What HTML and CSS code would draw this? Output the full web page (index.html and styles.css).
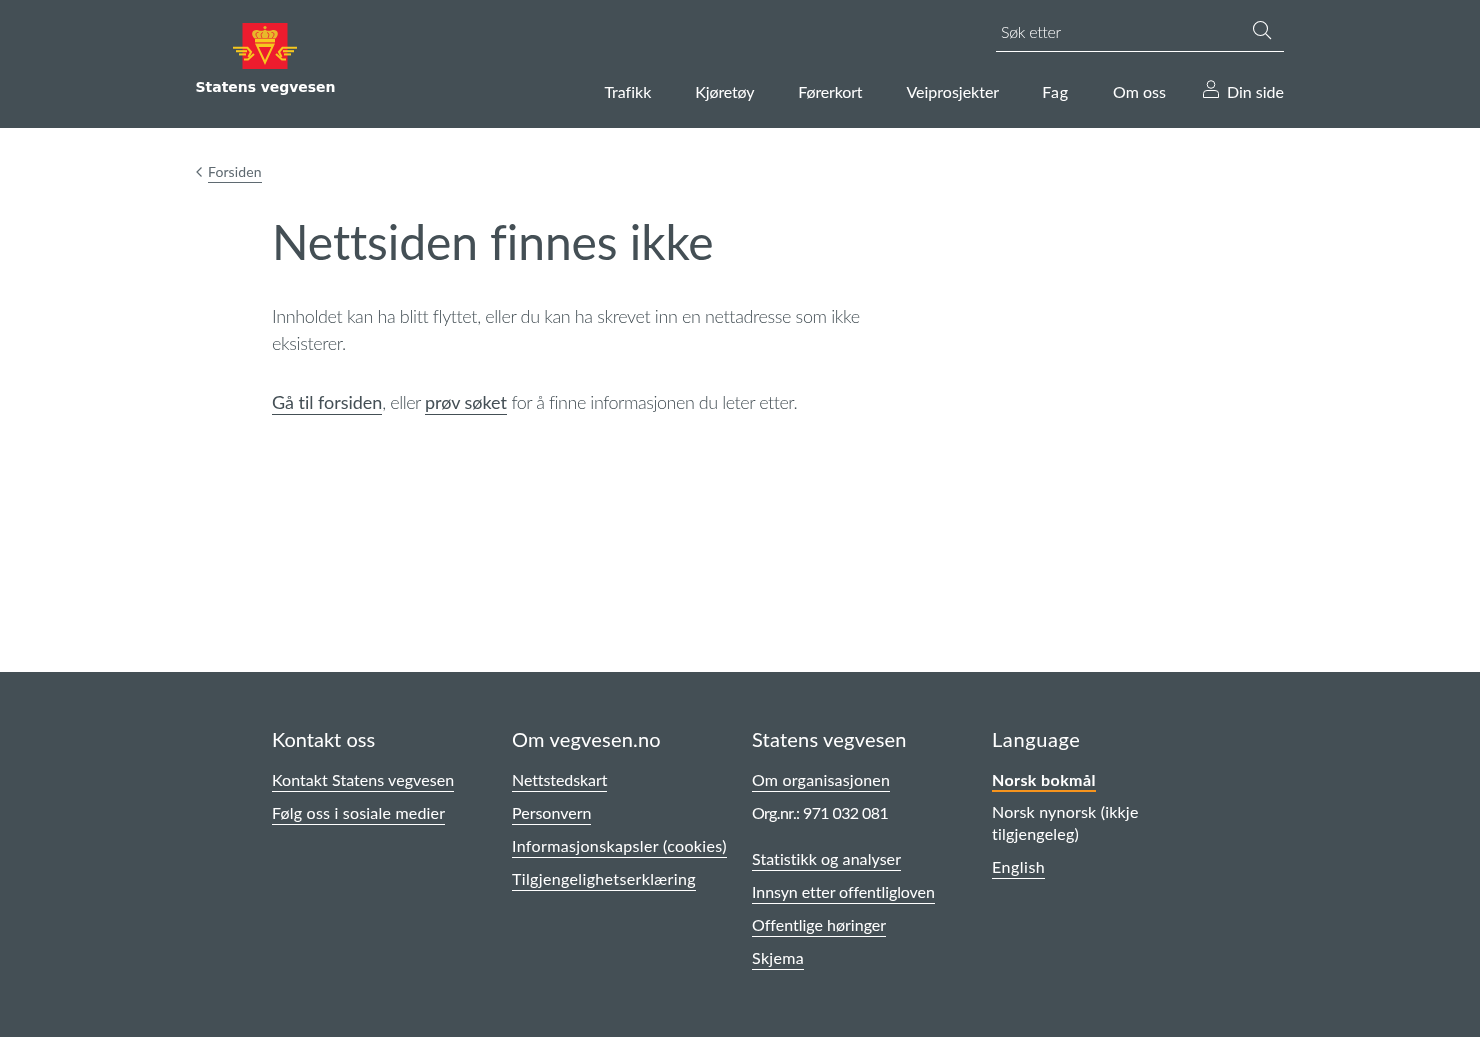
FILE: index.html
```html
<!DOCTYPE html>
<html lang="no">
<head>
<meta charset="utf-8">
<title>Nettsiden finnes ikke</title>
<link rel="stylesheet" href="styles.css">
</head>
<body>
<header class="site-header">
  <div class="header-inner">
    <a class="logo" href="#">
      <svg class="logo-mark" viewBox="0 0 64 46" width="64" height="46">
        <rect x="9.5" y="0" width="45" height="46" fill="#ed1c2e"/>
        <circle cx="32" cy="4.5" r="1.6" fill="#e0b02a"/>
        <path d="M21.5 15.5 C17 11 19.5 6 25 7.2 C28 8 30.5 8 32 6.5 C33.5 8 36 8 39 7.2 C44.5 6 47 11 42.5 15.5 Z" fill="#e8b82a"/>
        <path d="M24.8 15 C22 12 22.5 9 25.5 9.5 M29 15 C27.5 12 28 10 30 9.5 M35 15 C36.5 12 36 10 34 9.5 M39.2 15 C42 12 41.5 9 38.5 9.5" fill="none" stroke="#ed1c2e" stroke-width=".8"/>
        <rect x="22" y="16" width="20" height="3.4" fill="#f6c81e"/>
        <path d="M22 20.5 H42 L32 42 Z M25.8 24 L32 37 L38.2 24 Z" fill="#f6c81e" fill-rule="evenodd"/>
        <g fill="none" stroke="#f6c81e" stroke-width="2.1">
          <path d="M0 24.8 H14.5 L18 29 L15.5 34"/>
          <path d="M3 28.2 H14"/>
          <path d="M6 31.4 H13"/>
          <path d="M11 36.5 H15 L21 31"/>
        </g>
        <g fill="none" stroke="#f6c81e" stroke-width="2.1">
          <path d="M64 24.8 H49.5 L46 29 L48.5 34"/>
          <path d="M61 28.2 H50"/>
          <path d="M58 31.4 H51"/>
          <path d="M53 36.5 H49 L43 31"/>
        </g>
      </svg>
      <span class="logo-text">Statens vegvesen</span>
    </a>
    <div class="header-right">
      <form class="search">
        <span class="search-label">Søk etter</span>
        <svg class="search-icon" viewBox="0 0 20 20" width="20" height="20"><circle cx="8.5" cy="8.5" r="7" fill="none" stroke="#fff" stroke-width="1.1"/><path d="M13.6 13.6 L19 19" stroke="#fff" stroke-width="1.1" fill="none"/></svg>
      </form>
      <nav class="main-nav">
        <a href="#">Trafikk</a>
        <a href="#" class="tight">Kjøretøy</a>
        <a href="#" class="tight">Førerkort</a>
        <a href="#">Veiprosjekter</a>
        <a href="#" class="loose">Fag</a>
        <a href="#">Om oss</a>
        <a href="#" class="my-page">
          <svg viewBox="0 0 16 18" width="16" height="18"><circle cx="8" cy="4.5" r="3.8" fill="none" stroke="#fff" stroke-width="1"/><path d="M.5 17.5 V13.5 Q.5 10.5 4 10.5 H12 Q15.5 10.5 15.5 13.5 V17.5 Z" fill="none" stroke="#fff" stroke-width="1"/></svg>
          <span>Din side</span>
        </a>
      </nav>
    </div>
  </div>
</header>
<main class="content">
  <a class="back" href="#">
    <svg viewBox="0 0 6 10" width="6" height="10"><path d="M5.5 .5 L1 5 L5.5 9.5" fill="none" stroke="#5f6a71" stroke-width="1.2"/></svg>
    <span>Forsiden</span>
  </a>
  <article class="article">
    <h1>Nettsiden finnes ikke</h1>
    <p>Innholdet kan ha blitt flyttet, eller du kan ha skrevet inn en nettadresse som ikke eksisterer.</p>
    <p class="second"><a href="#">Gå til forsiden</a>, eller <a href="#">prøv søket</a> for å finne informasjonen du leter etter.</p>
  </article>
</main>
<footer class="site-footer">
  <div class="footer-grid">
    <section>
      <h2 class="snug">Kontakt oss</h2>
      <ul>
        <li><a href="#" class="slight">Kontakt Statens vegvesen</a></li>
        <li><a href="#" class="wide">Følg oss i sosiale medier</a></li>
      </ul>
    </section>
    <section>
      <h2>Om vegvesen.no</h2>
      <ul>
        <li><a href="#" class="narrow">Nettstedskart</a></li>
        <li><a href="#">Personvern</a></li>
        <li><a href="#" class="wider">Informasjonskapsler (cookies)</a></li>
        <li><a href="#" class="wider">Tilgjengelighetserklæring</a></li>
      </ul>
    </section>
    <section>
      <h2>Statens vegvesen</h2>
      <ul>
        <li><a href="#" class="wide">Om organisasjonen</a></li>
        <li class="plain org">Org.nr.: 971 032 081</li>
        <li><a href="#" class="slight">Statistikk og analyser</a></li>
        <li><a href="#" class="narrow">Innsyn etter offentligloven</a></li>
        <li><a href="#">Offentlige høringer</a></li>
        <li><a href="#" class="wider">Skjema</a></li>
      </ul>
    </section>
    <section>
      <h2 class="open">Language</h2>
      <ul>
        <li><a href="#" class="current">Norsk bokmål</a></li>
        <li class="plain lang">Norsk nynorsk (ikkje tilgjengeleg)</li>
        <li><a href="#" class="widest">English</a></li>
      </ul>
    </section>
  </div>
</footer>
</body>
</html>
```
FILE: styles.css
```css
* { box-sizing: border-box; }
html, body { margin: 0; padding: 0; }
body { font-family: Lato, "Open Sans", sans-serif; color: #444f55; background: #fff; font-weight: 300; font-variant-ligatures: none; }
a { color: inherit; text-decoration: none; }

.site-header { background: #444f55; height: 128px; color: #fff; }
.header-inner { width: 1088px; margin-left: 196px; height: 128px; display: flex; justify-content: space-between; will-change: transform; }
.logo { display: flex; flex-direction: column; align-items: center; width: 139px; padding-top: 23px; }
.logo-mark { display: block; margin-left: -1px; }
.logo-text { font-family: "DejaVu Sans", sans-serif; font-weight: 700; font-size: 14px; line-height: 18px; margin-top: 9px; white-space: nowrap; letter-spacing: -.05px; }
.header-right { display: flex; flex-direction: column; align-items: flex-end; }
.search { width: 288px; height: 40px; margin-top: 12px; border-bottom: 1px solid #fff; display: flex; justify-content: space-between; padding: 8px 12px 0 5px; }
.search-label { font-size: 16px; line-height: 24px; font-weight: 300; letter-spacing: -.3px; }
.main-nav { display: flex; align-items: flex-end; margin-top: 28px; font-size: 16px; font-weight: 400; line-height: 24px; }
.main-nav a { margin-left: 44px; }
.main-nav .tight { letter-spacing: -.15px; }
.main-nav .loose { letter-spacing: .9px; margin-left: 43px; }
.main-nav .my-page { margin-left: 37px; display: flex; align-items: flex-end; gap: 8px; }
.my-page svg { margin-bottom: 6px; }

.content { height: 544px; padding: 0 196px; will-change: transform; }
.back { display: inline-flex; align-items: center; gap: 6px; margin-top: 34px; font-size: 14px; line-height: 20px; color: #5f6a71; font-weight: 400; letter-spacing: .1px; }
.back svg { margin-top: -1px; }
.back span { border-bottom: 1px solid #5f6a71; }
.article { margin-left: 76px; width: 600px; }
h1 { margin: 30px 0 0; font-size: 48px; line-height: 58px; font-weight: 400; color: #444f55; letter-spacing: -.1px; }
.article p { font-size: 18px; line-height: 27px; margin: 32px 0 0; letter-spacing: -.37px; }
.article p.second { letter-spacing: -.46px; }
.article p a { font-weight: 400; border-bottom: 1px solid #444f55; padding-bottom: 1px; letter-spacing: -.03px; }

.site-footer { background: #444f55; color: #fff; height: 365px; padding: 53px 0 0 272px; }
.footer-grid { display: grid; grid-template-columns: repeat(4, 240px); will-change: transform; }
.footer-grid section { padding-right: 24px; }
h2 { margin: 0 0 17px; font-size: 20px; line-height: 28px; font-weight: 400; letter-spacing: .2px; }
h2.snug { letter-spacing: 0; }
h2.open { letter-spacing: .6px; }
ul { list-style: none; margin: 0; padding: 0; font-size: 16px; line-height: 22px; font-weight: 400; }
li { margin-bottom: 11px; display: flex; }
li a { border-bottom: 1px solid #fff; height: 22px; line-height: 20px; }
li a.slight { letter-spacing: .06px; }
li a.wide { letter-spacing: .2px; }
li a.wider { letter-spacing: .35px; }
li a.widest { letter-spacing: .5px; }
li a.narrow { letter-spacing: -.08px; }
li.org { margin-top: -1px; margin-bottom: 25px; letter-spacing: -.6px; }
li.lang { margin-top: -2px; margin-bottom: 12px; letter-spacing: .2px; }
li a.current { font-weight: 700; border-bottom: 2px solid #f7941d; letter-spacing: .4px; }
```
